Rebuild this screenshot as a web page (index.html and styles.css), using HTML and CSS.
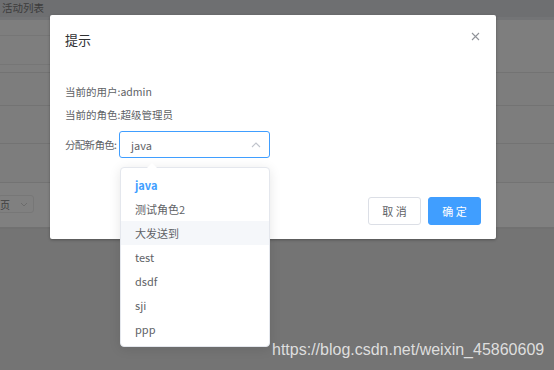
FILE: index.html
```html
<!DOCTYPE html>
<html lang="zh-CN">
<head>
  <meta charset="UTF-8">
  <meta name="viewport" content="width=device-width, initial-scale=1.0">
  <title>分配角色</title>
  <link rel="stylesheet" href="styles.css">
</head>
<body>
  <div class="page">
    <div class="topbar">活动列表</div>
    <div class="toolbar">
      <div class="filter"></div>
    </div>
    <div class="table">
      <div class="row"></div>
      <div class="row row-tall"></div>
      <div class="row"></div>
    </div>
    <div class="pager">
      <div class="pager-select">
        <span>页</span>
        <svg class="pager-arrow" width="8" height="5" viewBox="0 0 8 5"><path d="M1 1 L4 4 L7 1" fill="none" stroke="#6c6c6c" stroke-width="1"/></svg>
      </div>
    </div>
  </div>

  <div class="dialog">
    <div class="dialog-header">
      <span class="dialog-title">提示</span>
      <svg class="dialog-close" width="9" height="9" viewBox="0 0 9 9"><path d="M1 1 L8 8 M8 1 L1 8" stroke="#909399" stroke-width="1.1"/></svg>
    </div>
    <div class="dialog-body">
      <p class="line">当前的用户:admin</p>
      <p class="line">当前的角色:超级管理员</p>
      <div class="form-row">
        <label class="form-label">分配新角色:</label>
        <div class="select">
          <span>java</span>
          <svg class="select-arrow" width="10" height="6" viewBox="0 0 10 6"><path d="M1 5 L5 1 L9 5" fill="none" stroke="#c0c4cc" stroke-width="1.1"/></svg>
        </div>
      </div>
    </div>
    <div class="dialog-footer">
      <button class="btn">取 消</button>
      <button class="btn btn-primary">确 定</button>
    </div>
  </div>

  <div class="dropdown">
    <ul class="options">
      <li class="option selected">java</li>
      <li class="option">测试角色2</li>
      <li class="option hover">大发送到</li>
      <li class="option">test</li>
      <li class="option">dsdf</li>
      <li class="option">sji</li>
      <li class="option">ppp</li>
    </ul>
  </div>

  <div class="watermark">https://blog.csdn.net/weixin_45860609</div>
</body>
</html>
```

FILE: styles.css
```css
 body {
   margin: 0;
   width: 554px;
   height: 370px;
   overflow: hidden;
   background-color: #747474;
   font-family: "Noto Sans CJK SC", "Noto Sans", sans-serif;
   position: relative;
 }

 .page {
   display: flex;
   flex-direction: column;
 }

 .topbar {
   height: 14px;
   line-height: 13px;
   background-color: #6e6f71;
   color: #3c3c3c;
   font-size: 10.5px;
   padding: 1px 0 2px 2px;
   border-bottom: 3px solid #737476;
 }

 .toolbar {
   height: 53px;
   background-color: #7e7e7e;
   border-bottom: 1px solid #737373;
   padding-top: 15px;
   box-sizing: border-box;
 }

 .filter {
   width: 200px;
   height: 28px;
   border-top: 1px solid #767676;
   border-bottom: 1px solid #767676;
 }

 .table {
   display: flex;
   flex-direction: column;
   background-color: #7d7d7d;
 }

 .row {
   height: 32px;
   border-bottom: 1px solid #737373;
 }

 .row-tall {
   height: 37px;
 }

 .row:last-child {
   height: 38px;
 }

 .pager {
   height: 46px;
   background-color: #808080;
   border-bottom: 2px solid #717171;
   padding-top: 12px;
   box-sizing: border-box;
 }

 .pager-select {
   width: 36px;
   height: 18px;
   margin-left: -2px;
   border: 1px solid #777777;
   border-radius: 3px;
   box-sizing: border-box;
   display: flex;
   align-items: center;
   justify-content: space-between;
   padding: 0 5px 0 1px;
   font-size: 10px;
   color: #3e3e3e;
 }

 .dialog {
   position: absolute;
   left: 50px;
   top: 15px;
   width: 446px;
   height: 224px;
   background-color: #fff;
   border-radius: 2px;
   box-shadow: 0 1px 3px rgba(0, 0, 0, .3);
   box-sizing: border-box;
 }

 .dialog-header {
   height: 50px;
   padding: 17px 15px 0;
   box-sizing: border-box;
   position: relative;
 }

 .dialog-title {
   display: block;
   font-size: 13px;
   line-height: 16px;
   color: #303133;
 }

 .dialog-close {
   position: absolute;
   top: 17px;
   right: 16px;
 }

 .dialog-body {
   padding: 15px 15px 0;
   color: #606266;
   font-size: 10.5px;
 }

 .line {
   margin: 0;
   line-height: 23px;
 }

 .form-row {
   display: flex;
   align-items: center;
   margin-top: 5px;
 }

 .form-label {
   width: 54px;
   flex-shrink: 0;
   white-space: nowrap;
   letter-spacing: -0.7px;
 }

 .select {
   width: 151px;
   height: 27px;
   border: 1px solid #409eff;
   border-radius: 3px;
   box-sizing: border-box;
   display: flex;
   align-items: center;
   justify-content: space-between;
   padding: 0 8px 0 11px;
   font-size: 11px;
   color: #606266;
 }

 .dialog-footer {
   display: flex;
   justify-content: flex-end;
   gap: 7px;
   padding: 39px 15px 14px;
 }

 .btn {
   width: 53px;
   height: 28px;
   border: 1px solid #dcdfe6;
   border-radius: 3px;
   background-color: #fff;
   color: #606266;
   font-family: "Noto Sans CJK SC", sans-serif;
   font-size: 11px;
   padding: 0;
 }

 .btn-primary {
   background-color: #409eff;
   border-color: #409eff;
   color: #fff;
 }

 .dropdown {
   position: absolute;
   left: 120px;
   top: 167px;
   width: 150px;
   background-color: #fff;
   border: 1px solid #e4e7ed;
   border-radius: 4px;
   box-shadow: 0 2px 12px rgba(0, 0, 0, .1);
   box-sizing: border-box;
 }

 .dropdown::before {
   content: "";
   position: absolute;
   top: -5px;
   left: 26px;
   border-left: 5px solid transparent;
   border-right: 5px solid transparent;
   border-bottom: 5px solid #fff;
 }

 .options {
   list-style: none;
   margin: 0;
   padding: 5px 0;
 }

 .option {
   height: 24px;
   line-height: 24px;
   padding-left: 14px;
   font-size: 11px;
   color: #606266;
 }

 .option.selected {
   color: #409eff;
   font-weight: 700;
 }

 .option.hover {
   background-color: #f5f7fa;
 }

 .watermark {
   position: absolute;
   left: 272px;
   top: 341px;
   font-family: "Liberation Sans", Arial, sans-serif;
   font-size: 16px;
   color: #dedede;
   white-space: nowrap;
 }
```
